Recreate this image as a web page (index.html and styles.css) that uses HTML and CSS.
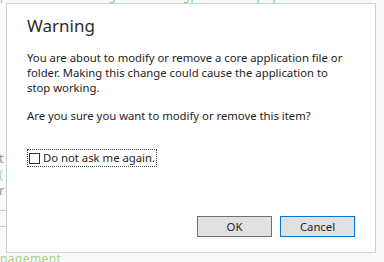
FILE: index.html
```html
<!DOCTYPE html>
<html>
<head>
<meta charset="utf-8">
<link rel="stylesheet" href="styles.css">
</head>
<body>
<div class="page">
  <div class="page-top"><span class="page-top-text">pensource/cover/gi/Licenses/gpl-License.php-ent-7-0ee20-Licensee</span></div>
  <div class="page-side">
    <div class="side-line side-t">t</div>
    <div class="side-line side-p">(</div>
    <div class="side-line side-r">r</div>
    <div class="side-rule"></div>
    <div class="side-rule second"></div>
  </div>
  <div class="page-bottom">nagement</div>
</div>
<div class="dialog">
  <div class="dialog-title">Warning</div>
  <p class="dialog-text">You are about to modify or remove a core application file or folder. Making this change could cause the application to stop working.</p>
  <p class="dialog-text question">Are you sure you want to modify or remove this item?</p>
  <label class="check">
    <span class="box"></span>
    <span class="check-label">Do not ask me again.</span>
  </label>
  <div class="actions">
    <button class="btn btn-ok">OK</button>
    <button class="btn btn-cancel">Cancel</button>
  </div>
</div>
</body>
</html>
```
FILE: styles.css
```css
html, body {
  margin: 0;
  padding: 0;
}
body {
  width: 384px;
  height: 262px;
  overflow: hidden;
  background: #f9f9f9;
  font-family: "Segoe UI", "Noto Sans", "Open Sans", sans-serif;
  position: relative;
}
.page {
  height: 262px;
  display: flex;
  flex-direction: column;
  overflow: hidden;
}
.page-top {
  height: 3px;
  flex: none;
  overflow: hidden;
}
.page-top-text {
  display: block;
  margin-top: -10px;
  font-size: 12px;
  line-height: 12px;
  color: #9ccc7a;
  white-space: nowrap;
  letter-spacing: 0.6px;
}
.page-side {
  margin-top: 147px;
  width: 6px;
  flex: none;
  overflow: hidden;
  display: flex;
  flex-direction: column;
}
.side-line {
  font-size: 13px;
  line-height: 16px;
  height: 16px;
  color: #999;
  margin-left: -1px;
}
.side-p {
  color: #a8d3cf;
}
.side-rule {
  height: 1px;
  background: #d9c4dc;
  margin-top: 12px;
}
.side-rule.second {
  margin-top: 15px;
}
.page-bottom {
  margin-top: auto;
  flex: none;
  font-size: 12px;
  line-height: 12px;
  height: 9px;
  overflow: hidden;
  color: #a8cf86;
  letter-spacing: 0.4px;
  white-space: nowrap;
}
.dialog {
  position: absolute;
  z-index: 1;
  left: 6px;
  top: 3px;
  width: 370px;
  height: 250px;
  box-sizing: border-box;
  background: #fff;
  border: 1px solid #cfcfcf;
  padding: 10px 20px 0 20px;
  display: flex;
  flex-direction: column;
  color: #1e1e1e;
}
.dialog-title {
  font-size: 17px;
  line-height: 24px;
  color: #2b2b2b;
}
.dialog-text {
  margin: 12px 0 0 0;
  padding-right: 6px;
  font-size: 11.3px;
  line-height: 15px;
}
.dialog-text.question {
  margin-top: 13px;
}
.check {
  margin-top: 27px;
  display: flex;
  align-items: center;
  align-self: flex-start;
  gap: 3px;
  font-size: 11.3px;
  line-height: 14px;
  outline: 1px dotted #444;
  padding: 1px;
  margin-left: 1px;
}
.box {
  width: 11px;
  height: 11px;
  box-sizing: border-box;
  border: 1px solid #333;
  background: #fff;
}
.actions {
  margin-top: auto;
  margin-bottom: 15px;
  display: flex;
  justify-content: flex-end;
  gap: 8px;
}
.btn {
  width: 75px;
  height: 21px;
  box-sizing: border-box;
  background: #e1e1e1;
  border: 1px solid #adadad;
  font-family: inherit;
  font-size: 11.3px;
  color: #1e1e1e;
  padding: 0;
}
.btn-ok {
  border-color: #707070;
}
.btn-cancel {
  border-color: #0078d7;
}
```
